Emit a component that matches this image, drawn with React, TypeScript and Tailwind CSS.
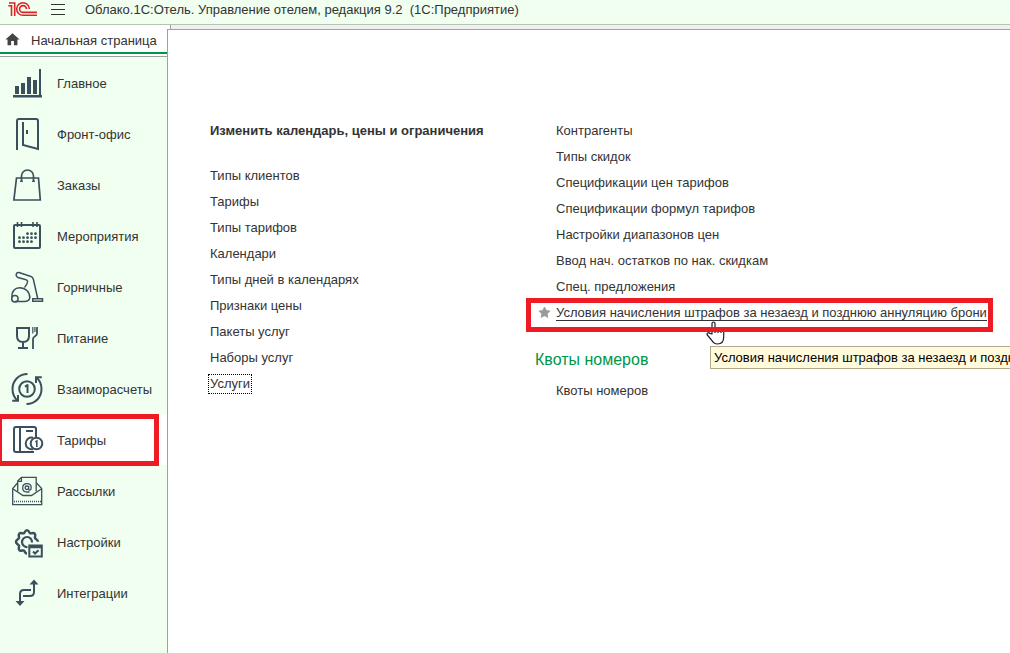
import { Star } from "lucide-react";
import { MdHome } from "react-icons/md";
import type { ReactNode } from "react";

interface NavItem {
  label: string;
  icon: ReactNode;
  active?: boolean;
}

const NAV: NavItem[] = [
  {
    label: "Главное",
    icon: (
      <g fill="currentColor" stroke="none">
        <path d="M2 29h29v2.5H2zM28 3h2v26h-2zM4 20h4v8H4zM10 17h4v11h-4zM16 11h4v17h-4zM22 14h4v14h-4z" />
      </g>
    ),
  },
  {
    label: "Фронт-офис",
    icon: (
      <>
        <path d="M6 33V4a2 2 0 0 1 2-2h17a2 2 0 0 1 2 2v28L12 28V5" />
        <path d="M16 13v4" />
      </>
    ),
  },
  {
    label: "Заказы",
    icon: (
      <>
        <path d="M5.5 10h22L29.300 32H2.900z" strokeWidth="1.700" />
        <path d="M10.500 14V8a6 6 0 0 1 12 0v6" strokeWidth="1.700" />
        <path d="M10.500 12.500v1.500M22.500 12.500v1.500" strokeWidth="2.500" />
      </>
    ),
  },
  {
    label: "Мероприятия",
    icon: (
      <>
        <rect x="3" y="6" width="26" height="23" rx="1" />
        <path d="M6.500 3v5M10.500 3v5M22 3v5M26 3v5" strokeWidth="1.600" />
        <path
          d="M16.500 14.700h.01M20.500 14.700h.01M24.500 14.700h.01M8.500 18.700h.01M12.500 18.700h.01M16.500 18.700h.01M20.500 18.700h.01M24.500 18.700h.01M8.500 22.700h.01M12.500 22.700h.01M16.500 22.700h.01M20.500 22.700h.01"
          strokeWidth="2.800"
          strokeLinecap="round"
        />
      </>
    ),
  },
  {
    label: "Горничные",
    icon: (
      <g strokeWidth="1.500">
        <path d="M1 27.500C.5 21 4 17.700 8.500 17.700c6 0 10.300 4 10.300 10 0 2-2.300 3.800-5.300 3.800H4" />
        <circle cx="3.900" cy="28.700" r="3.200" />
        <path d="M13.500 17.500c1.500-2 3.500-4.500 3-6.500-.3-1.300-2-1.500-4-2L7 7.500C4 6 5 2 8 2.500l12 4c1.500.5 2 1.300 2.400 3l4.300 19" />
        <path d="M21.800 28.700h9.700v2.600h-9.700z" />
      </g>
    ),
  },
  {
    label: "Питание",
    icon: (
      <>
        <path d="M6 7h12v8c0 4-2.500 6-6 6s-6-2-6-6zM12 21v6M7 27h10" />
        <path d="M26 6v6.500c0 3-4 2.500-4 5.500v10" strokeWidth="1.800" />
        <path d="M21.800 6v6.500M23.900 6v5" strokeWidth="1.200" />
      </>
    ),
  },
  {
    label: "Взаиморасчеты",
    icon: (
      <>
        <circle cx="16" cy="17" r="7.800" />
        <path d="M14 14.800l2-1.500h.5V21" />
        <path d="M16.500 2C7.500 2 1.500 9 1.500 17c0 4.500 1.500 8.500 5 11.500" />
        <path d="M15.500 32c9 0 15-7 15-15 0-4.500-1.500-8.500-5-11.500" />
        <path d="M7 23v5.700H1.200M25 11V5.300h5.800" />
      </>
    ),
  },
  {
    label: "Тарифы",
    active: true,
    icon: (
      <>
        <path d="M25 14V6a2 2 0 0 0-2-2H5a2 2 0 0 0-2 2v21a2 2 0 0 0 2 2h18M9 4v25M15 8h7" />
        <path d="M22 14.800a5.800 5.800 0 1 0 0 11.200" />
        <circle cx="25.500" cy="20.500" r="5.800" />
        <path d="M24.500 19l1.300-1V24" strokeWidth="1.600" />
      </>
    ),
  },
  {
    label: "Рассылки",
    icon: (
      <g strokeWidth="1.300">
        <path d="M6.500 9L1.700 14.500v16.200h29V14.500L25.500 9M1.700 14.700L12 21.500h8.500l10.200-6.800" />
        <path d="M6.700 17.500V7l3.700-3.700h14.800v14.200M6.700 7.300h3.700v-4" />
        <path d="M17.700 12v3.200c0 1.500 2.500 1.300 2.500-1.500 0-2.700-2-4-4.200-4-2.500 0-4.300 1.800-4.300 4.300s1.800 4 4.300 4h2.500M17.700 13.800a1.800 1.800 0 1 1-3.600 0 1.800 1.800 0 0 1 3.600 0" />
        <path d="M3 27.500h27" strokeWidth="1.600" strokeDasharray="1 1" />
      </g>
    ),
  },
  {
    label: "Настройки",
    icon: (
      <>
        <path
          d="M16 28.500c-2.200 0-2.200-2.500-3.200-3-1.200-.6-3 1.200-4.500-.3s.2-3.200-.3-4.500C7.500 19.500 5 19 5 16.800s2.500-2.500 3-3.700c.5-1.300-1.200-3 .3-4.500s3.300.2 4.500-.3c1.200-.5 1-3.100 3.200-3.100s2 2.600 3.200 3.100c1.200.5 3-1.200 4.500.3s-.2 3.200.3 4.500c.5 1.200 3 1.500 3 3.700"
          strokeWidth="2.500"
        />
        <path d="M16.500 22a5 5 0 1 1 4.500-4.500" strokeWidth="2.200" />
        <path d="M18.300 20.500h12.500V31.500H18.300zM18 22.300h13" />
        <path d="M22 26.500l2 2 3.500-3.300" />
      </>
    ),
  },
  {
    label: "Интеграции",
    icon: (
      <>
        <path d="M20 14h-7c-2.500 0-4 1.500-4 4v8M12 20h7c2.500 0 4-1.500 4-4V8" />
        <path d="M4.500 25h9L9 30zM18.500 8.500h9l-4.500-5z" fill="currentColor" stroke="none" />
      </>
    ),
  },
];

const LEFT_LINKS = [
  "Типы клиентов",
  "Тарифы",
  "Типы тарифов",
  "Календари",
  "Типы дней в календарях",
  "Признаки цены",
  "Пакеты услуг",
  "Наборы услуг",
];

const RIGHT_LINKS = [
  "Контрагенты",
  "Типы скидок",
  "Спецификации цен тарифов",
  "Спецификации формул тарифов",
  "Настройки диапазонов цен",
  "Ввод нач. остатков по нак. скидкам",
  "Спец. предложения",
];

const PENALTY = "Условия начисления штрафов за незаезд и позднюю аннуляцию брони";

function Logo() {
  return (
    <svg width="30" height="16" viewBox="0 0 30 16" fill="none" stroke="#d9252a" strokeWidth="1.600" aria-label="1С">
      <path d="M.3 4.800h3.200V15M1 2h5.700v13" />
      <path d="M21.300 8A6.300 6.300 0 1 0 15 14.300H29" />
      <path d="M18.400 8A3.400 3.400 0 1 0 15 11.400H29" />
    </svg>
  );
}

function HandCursor() {
  return (
    <svg
      className="pointer-events-none absolute left-[171px] top-[21px] z-10"
      width="20"
      height="24"
      viewBox="0 0 20 24"
      fill="#fff"
      stroke="#1c1c2c"
      strokeWidth="1.200"
      strokeLinejoin="round"
    >
      <path d="M6 13V2.500c0-2 3-2 3 0V8c0-1.500 3-1.300 3 .3 0-1.300 3-1 3 .5 0-1.200 2.700-.8 2.700 1V16c0 4.500-2.500 7-6.200 7-3 0-4.500-1.500-6-4L1.300 14c-1-2 1.200-3 2.500-1.600z" />
      <path d="M9 8v4M12 8.500V12M15 9v3" />
    </svg>
  );
}

function SectionLink({ children }: { children: string }) {
  return (
    <li className="h-[26px]">
      <a href="#" className="hover:underline">
        {children}
      </a>
    </li>
  );
}

export default function App() {
  return (
    <div className="flex min-h-screen flex-col overflow-hidden bg-white font-['Liberation_Sans',Arial,sans-serif] text-[13px] text-[#333]">
      <header className="flex h-[25px] items-start border-b border-[#b5c4b5] bg-[#f0fff0] pl-2">
        <div className="pt-px">
          <Logo />
        </div>
        <button type="button" aria-label="Меню" className="ml-[13px] flex flex-col gap-1 pt-1">
          <span className="h-px w-[14px] bg-[#333]" />
          <span className="h-px w-[14px] bg-[#333]" />
          <span className="h-px w-[14px] bg-[#333]" />
        </button>
        <h1 className="ml-5 whitespace-pre leading-5">
          Облако.1С:Отель. Управление отелем, редакция 9.2  (1С:Предприятие)
        </h1>
      </header>

      <div className="flex flex-1">
        <aside className="flex w-[167px] shrink-0 flex-col">
          <a href="#" className="flex h-[29px] items-center gap-[10px] border-b-2 border-[#009646] pl-1 pt-1">
            <MdHome size={17} className="mb-[2px] shrink-0 text-[#444]" />
            <span className="whitespace-nowrap">Начальная страница</span>
          </a>
          <nav className="mt-[2px] flex-1 border-t border-[#a0a0a0] bg-[#f0fff0]">
            {NAV.map((item) => (
              <a
                key={item.label}
                href="#"
                className={`relative flex h-[51px] items-center gap-[14px] pl-[11px] ${item.active ? "bg-white" : ""}`}
              >
                <svg
                  width="32"
                  height="33"
                  viewBox="0 0 32 33"
                  fill="none"
                  stroke="currentColor"
                  strokeWidth="2"
                  className="shrink-0 overflow-visible text-[#3c4f5c]"
                >
                  {item.icon}
                </svg>
                <span className="pt-[2px]">{item.label}</span>
                {item.active && (
                  <span className="absolute -bottom-px -left-[3px] right-2 top-0 border-[5px] border-[#ed1c24]" />
                )}
              </a>
            ))}
          </nav>
        </aside>

        <div className="flex min-w-0 flex-1 flex-col">
          <div className="ml-[3px] h-1 border-l border-[#a0a0a0] bg-[#f0f0f0]" />
          <main className="flex flex-1 border-l border-t border-[#a0a0a0] pl-[42px] pt-[88px] leading-[26px]">
            <section className="w-[325px] shrink-0">
              <h2 className="font-bold">
                <a href="#">Изменить календарь, цены и ограничения</a>
              </h2>
              <ul className="mt-[19px]">
                {LEFT_LINKS.map((label) => (
                  <SectionLink key={label}>{label}</SectionLink>
                ))}
                <li className="flex h-[26px] items-center">
                  <a href="#" className="-ml-[2px] border border-dotted border-black px-px leading-[18px]">
                    Услуги
                  </a>
                </li>
              </ul>
            </section>

            <section className="min-w-0 flex-1">
              <ul className="pl-[21px]">
                {RIGHT_LINKS.map((label) => (
                  <SectionLink key={label}>{label}</SectionLink>
                ))}
              </ul>
              <div className="relative flex h-[26px] w-max items-center">
                <Star size={13} fill="#999" stroke="#999" strokeWidth={1} className="mb-[2px] ml-[3px] mr-[5px]" />
                <a href="#" className="border-b border-[#333] leading-[15px]">
                  {PENALTY}
                </a>
                <HandCursor />
                <span className="absolute -bottom-[6px] -left-[9px] -right-[6px] -top-[2px] z-20 border-[5px] border-[#ed1c24]" />
                <div
                  role="tooltip"
                  className="absolute left-[175px] top-[46px] whitespace-nowrap border border-[#b0a98a] bg-[#fffbdc] px-[3px] leading-[21px] text-black"
                >
                  {PENALTY}
                </div>
              </div>
              <h2 className="mb-[5px] mt-[21px] text-base leading-[26px] text-[#009646]">Квоты номеров</h2>
              <ul className="pl-[21px]">
                <SectionLink>Квоты номеров</SectionLink>
              </ul>
            </section>
          </main>
        </div>
      </div>
    </div>
  );
}
